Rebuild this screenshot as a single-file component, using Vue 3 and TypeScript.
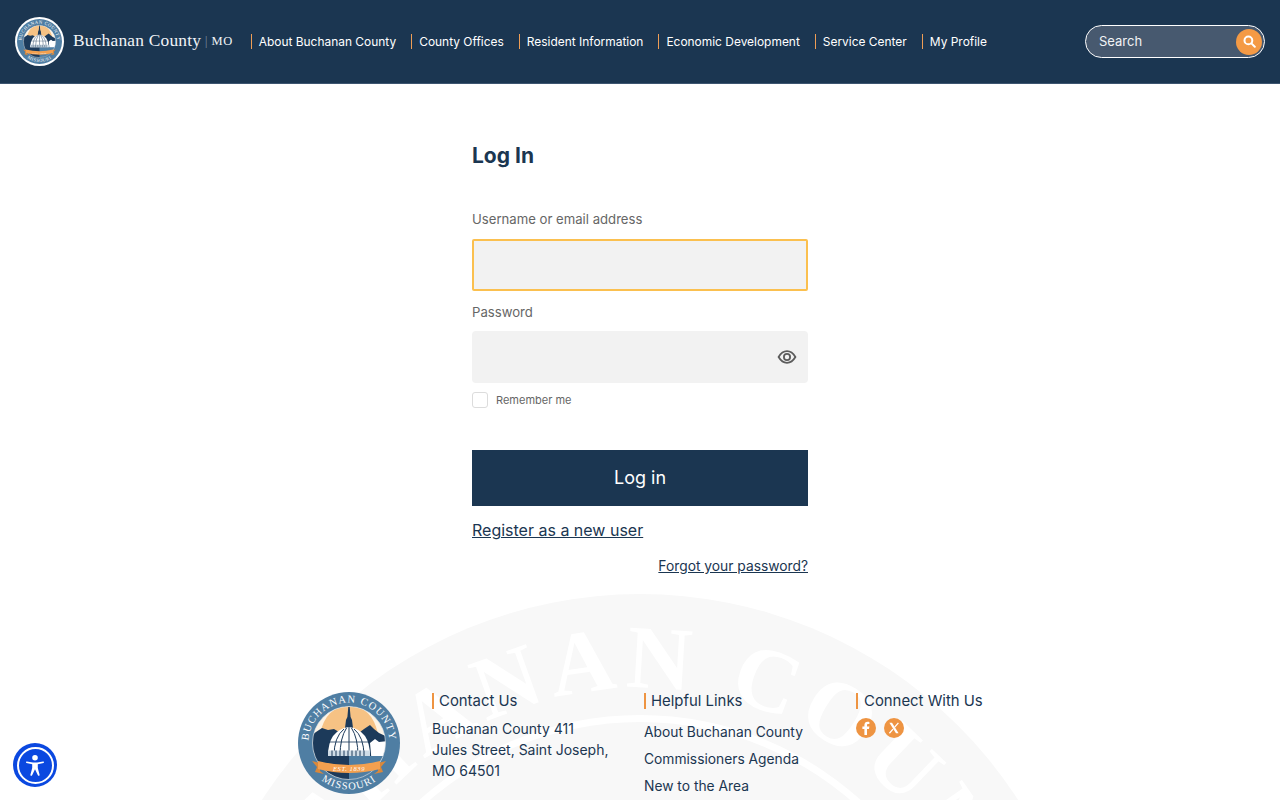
<script setup lang="ts">
const navItems = [
  'About Buchanan County',
  'County Offices',
  'Resident Information',
  'Economic Development',
  'Service Center',
  'My Profile',
];
const helpfulLinks = ['About Buchanan County', 'Commissioners Agenda', 'New to the Area'];
</script>

<template>
  <div class="page">
    <svg class="defs" width="0" height="0" aria-hidden="true">
      <defs>
        <clipPath id="seal-inner"><circle cx="51" cy="51" r="36.5" /></clipPath>
        <path id="seal-top-arc" d="M11.5 60 A40.5 40.5 0 1 1 90.5 60" />
        <path id="seal-bottom-arc" d="M11 74.7 A46.5 46.5 0 0 0 91 74.7" />
        <symbol id="seal" viewBox="0 0 102 102">
          <circle cx="51" cy="51" r="51" fill="#4f7ea3" />
          <g clip-path="url(#seal-inner)">
            <rect x="10" y="10" width="82" height="82" fill="#fdf3e4" />
            <path d="M22 42 Q28 14 51 14 Q74 14 80 42 Z" fill="#f6c284" />
            <path d="M10 46 L18 40 L24 36 L30 38 L36 37 L41 40 L62 40 L66 37 L72 33 L76 37 L81 41 L92 46 V92 H10 Z" fill="#1c3a5a" />
            <path d="M72 51 L77 47 L81 50 L92 49 V76 L74 76 L73 62 Z" fill="#fff" />
            <rect x="51" y="64" width="42" height="28" fill="#4f7ea3" />
          </g>
          <circle cx="51" cy="51" r="36.5" fill="none" stroke="#dfe8ef" stroke-width="0.6" />
          <path d="M50.3 15 H51.7 L52.6 25 L54 28 L55 36 H47 L48 28 L49.4 25 Z" fill="#1c3a5a" />
          <path d="M30 64 Q30 38 51 35 Q72 38 72 64 Z" fill="#fff" />
          <path d="M36 64 Q36 45 46 37 M42 64 Q42 46 48.5 36 M51 35 V64 M60 64 Q60 46 53.5 36 M66 64 Q66 45 56 37" stroke="#1c3a5a" stroke-width="1" fill="none" />
          <path d="M31 50 H71" stroke="#1c3a5a" stroke-width="0.8" />
          <path d="M30 58.5 H72 V64 H30 Z" fill="#cfdce6" />
          <path d="M34 58.5 V64 M38 58.5 V64 M42 58.5 V64 M46 58.5 V64 M50 58.5 V64 M54 58.5 V64 M58 58.5 V64 M62 58.5 V64 M66 58.5 V64" stroke="#1c3a5a" stroke-width="1" />
          <path d="M14 69 L22 71 L22 79 L26 82 L17 80 L19 75 Z" fill="#d9883b" />
          <path d="M88 69 L80 71 L80 79 L76 82 L85 80 L83 75 Z" fill="#d9883b" />
          <path d="M20 69 Q51 77 82 69 L82 77 Q51 85 20 77 Z" fill="#f3a04f" />
          <text x="51" y="78.5" text-anchor="middle" class="seal-est">EST. 1839</text>
          <text class="seal-ring"><textPath href="#seal-top-arc" startOffset="50%" text-anchor="middle">BUCHANAN COUNTY</textPath></text>
          <text class="seal-ring"><textPath href="#seal-bottom-arc" startOffset="50%" text-anchor="middle">MISSOURI</textPath></text>
        </symbol>
      </defs>
    </svg>

    <header class="site-header">
      <a class="brand" href="#">
        <span class="brand-logo">
          <svg width="45" height="45"><use href="#seal" /></svg>
        </span>
        <span class="brand-name">Buchanan County</span>
        <span class="brand-sep">|</span>
        <span class="brand-state">MO</span>
      </a>
      <nav class="main-nav">
        <a v-for="item in navItems" :key="item" href="#">{{ item }}</a>
      </nav>
      <form class="search" @submit.prevent>
        <span class="search-label">Search</span>
        <button type="button" class="search-btn" aria-label="Search">
          <svg width="13" height="13" viewBox="0 0 13 13" fill="none" stroke="#fff" stroke-width="2" stroke-linecap="round">
            <circle cx="5.4" cy="5.4" r="3.9" />
            <path d="M8.4 8.4 L11.8 11.8" />
          </svg>
        </button>
      </form>
    </header>

    <main class="login">
      <h1>Log In</h1>
      <label class="field-label first">Username or email address</label>
      <div class="input focused"></div>
      <label class="field-label second">Password</label>
      <div class="input password">
        <svg class="eye" width="20" height="20" viewBox="0 0 20 20" fill="none" stroke="#5c5c5c" stroke-width="1.8">
          <path d="M1.6 10 C4 5.9 6.8 4.2 10 4.2 C13.2 4.2 16 5.9 18.4 10 C16 14.1 13.2 15.8 10 15.8 C6.8 15.8 4 14.1 1.6 10 Z" />
          <circle cx="10" cy="10" r="3.1" />
        </svg>
      </div>
      <div class="remember">
        <span class="check"></span>
        <span>Remember me</span>
      </div>
      <button type="button" class="submit">Log in</button>
      <a class="register" href="#">Register as a new user</a>
      <a class="forgot" href="#">Forgot your password?</a>
    </main>

    <footer class="site-footer">
      <svg class="watermark" viewBox="0 0 900 206" width="900" height="206" aria-hidden="true">
        <defs>
          <path id="wm-arc" d="M450 806 A356 356 0 1 1 450.01 806" />
        </defs>
        <circle cx="450" cy="450" r="450" fill="#f8f8f8" />
        <circle cx="450" cy="450" r="329" fill="#fff" />
        <circle cx="450" cy="450" r="322" fill="#f8f8f8" />
        <text class="wm-text"><textPath href="#wm-arc" startOffset="50%" text-anchor="middle">BUCHANAN COUNTY</textPath></text>
      </svg>
      <div class="footer-inner">
        <svg class="footer-seal" width="102" height="102"><use href="#seal" /></svg>
        <section class="col">
          <h2>Contact Us</h2>
          <p>Buchanan County 411<br />Jules Street, Saint Joseph,<br />MO 64501</p>
        </section>
        <section class="col">
          <h2>Helpful Links</h2>
          <ul>
            <li v-for="link in helpfulLinks" :key="link"><a href="#">{{ link }}</a></li>
          </ul>
        </section>
        <section class="col">
          <h2 class="wide">Connect With Us</h2>
          <div class="social">
            <a href="#" aria-label="Facebook">
              <svg width="20" height="20" viewBox="0 0 20 20">
                <circle cx="10" cy="10" r="10" fill="#ee9442" />
                <path d="M11 17 V11 H13 L13.4 8.5 H11 V7.2 C11 6.5 11.3 6 12.2 6 H13.4 V3.9 C13.1 3.8 12.4 3.7 11.6 3.7 C9.7 3.7 8.4 4.9 8.4 7 V8.5 H6.4 V11 H8.4 V17 Z" fill="#fff" />
              </svg>
            </a>
            <a href="#" aria-label="X">
              <svg width="20" height="20" viewBox="0 0 20 20">
                <circle cx="10" cy="10" r="10" fill="#ee9442" />
                <path d="M5.4 4.8 H8 L14.6 15.2 H12 Z" fill="#fff" />
                <path d="M14.4 4.8 L10.7 9.2 M9 11.1 L5.4 15.2" stroke="#fff" stroke-width="1.3" />
              </svg>
            </a>
          </div>
        </section>
      </div>
    </footer>

    <button type="button" class="a11y" aria-label="Accessibility">
      <span class="a11y-ring">
        <svg viewBox="0 0 24 28" fill="#fff">
          <circle cx="12" cy="4.6" r="3.4" />
          <path d="M2 9.2 C1 8.9 .6 10.6 1.6 10.9 L8.6 12.6 V17 L6.4 25.2 C6.1 26.6 8 27 8.5 25.8 L12 18.5 L15.5 25.8 C16 27 17.9 26.6 17.6 25.2 L15.4 17 V12.6 L22.4 10.9 C23.4 10.6 23 8.9 22 9.2 L14.5 10.4 H9.5 Z" />
        </svg>
      </span>
    </button>
  </div>
</template>

<style scoped>
.page {
  height: 800px;
  overflow: hidden;
  background: #fff;
  font-family: Inter, "Liberation Sans", sans-serif;
  color: #1b3651;
}

.defs {
  position: absolute;
}

.seal-ring {
  font-family: "Liberation Serif", serif;
  font-size: 10.5px;
  letter-spacing: 1.1px;
  fill: #fff;
}

.seal-est {
  font-family: "Liberation Serif", serif;
  font-style: italic;
  font-size: 6.5px;
  letter-spacing: 0.6px;
  fill: #fff;
}

.site-header {
  height: 83px;
  box-sizing: content-box;
  border-bottom: 1px solid #3d5570;
  background: #1b3651;
  display: flex;
  align-items: center;
  padding: 0 15px;
}

.brand {
  display: flex;
  align-items: center;
  color: #f0f3f6;
  text-decoration: none;
  font-family: "Liberation Serif", serif;
}

.brand-logo {
  width: 49px;
  height: 49px;
  border-radius: 50%;
  background: #fff;
  display: flex;
  align-items: center;
  justify-content: center;
  margin-right: 9px;
}

.brand-logo svg {
  display: block;
}

.brand-name {
  font-size: 17.4px;
  letter-spacing: 0.2px;
  margin-top: -3px;
}

.brand-sep {
  font-size: 12px;
  color: #7f93a8;
  margin: 0 4px;
}

.brand-state {
  font-size: 12.5px;
  letter-spacing: 0.5px;
}

.main-nav {
  display: flex;
  margin-left: 18px;
  gap: 15px;
}

.main-nav a {
  color: #fff;
  font-size: 11.95px;
  line-height: 15px;
  text-decoration: none;
  border-left: 1px solid #ee9d55;
  padding-left: 7px;
}

.search {
  margin-left: auto;
  width: 180px;
  height: 33px;
  box-sizing: border-box;
  border: 1px solid #fff;
  border-radius: 17px;
  background: #47596f;
  display: flex;
  align-items: center;
  justify-content: space-between;
  padding: 0 0 0 13px;
}

.search-label {
  color: #f1f3f5;
  font-size: 13px;
  margin-top: -1px;
}

.search-btn {
  width: 26px;
  height: 26px;
  margin-right: 2px;
  padding: 0;
  border: none;
  border-radius: 50%;
  background: #f49a45;
  display: flex;
  align-items: center;
  justify-content: center;
}

.login {
  width: 336px;
  margin: 0 auto;
  display: flex;
  flex-direction: column;
}

h1 {
  margin: 58px 0 0;
  font-size: 21px;
  line-height: 28px;
  font-weight: 700;
  color: #1b3651;
}

.field-label {
  font-size: 13.15px;
  line-height: 16px;
  color: #666;
}

.first {
  margin-top: 41px;
}

.second {
  margin-top: 13px;
}

.input {
  margin-top: 12px;
  height: 52px;
  box-sizing: border-box;
  background: #f2f2f2;
  border-radius: 4px;
  display: flex;
  align-items: center;
  justify-content: flex-end;
  padding-right: 11px;
}

.input.password {
  margin-top: 11px;
}

.input.focused {
  border: 2px solid #fbc04f;
  border-radius: 2px;
}

.remember {
  margin-top: 9px;
  display: flex;
  align-items: center;
  gap: 8px;
  font-size: 11px;
  line-height: 16px;
  color: #666;
}

.check {
  width: 16px;
  height: 16px;
  box-sizing: border-box;
  border: 1px solid #dcdcdc;
  border-radius: 3px;
  background: #fff;
}

.submit {
  margin-top: 42px;
  height: 56px;
  padding: 0 0 2px;
  border: none;
  background: #1b3651;
  color: #fff;
  font-family: inherit;
  font-size: 18px;
}

.register {
  margin-top: 14px;
  font-size: 16px;
  line-height: 20px;
  color: #1b3651;
}

.forgot {
  margin-top: 17px;
  align-self: flex-end;
  font-size: 13.8px;
  line-height: 18px;
  color: #1b3651;
}

.site-footer {
  position: relative;
  margin-top: 19px;
  height: 206px;
}

.watermark {
  position: absolute;
  left: 190px;
  top: 0;
}

.wm-text {
  font-family: "Liberation Serif", serif;
  font-size: 90px;
  font-weight: 700;
  letter-spacing: 7px;
  fill: #fff;
}

.footer-inner {
  position: relative;
  display: flex;
  padding: 98px 0 0 298px;
}

.footer-seal {
  flex: none;
  margin-right: 32px;
}

.col {
  width: 212px;
  font-size: 14px;
  line-height: 21px;
}

.col h2 {
  margin: 1px 0 0;
  border-left: 2px solid #ee9442;
  padding-left: 5px;
  font-size: 14.9px;
  line-height: 16px;
  font-weight: 400;
}

.col h2.wide {
  padding-left: 6px;
}

.col p {
  margin: 9px 0 0;
}

.col ul {
  list-style: none;
  margin: 10px 0 0;
  padding: 0;
}

.col li {
  height: 27px;
  line-height: 27px;
  font-size: 13.8px;
}

.col a {
  color: inherit;
  text-decoration: none;
}

.social {
  display: flex;
  gap: 8px;
  margin-top: 9px;
}

.social a {
  display: block;
  height: 20px;
}

.a11y {
  position: fixed;
  left: 13px;
  top: 743px;
  width: 44px;
  height: 44px;
  padding: 0;
  border: none;
  border-radius: 50%;
  background: #0b48e0;
  display: flex;
  align-items: center;
  justify-content: center;
}

.a11y-ring {
  width: 37px;
  height: 37px;
  box-sizing: border-box;
  border: 2px solid #fff;
  border-radius: 50%;
  display: flex;
  align-items: center;
  justify-content: center;
}

.a11y-ring svg {
  width: 20px;
  height: 23px;
}
</style>
